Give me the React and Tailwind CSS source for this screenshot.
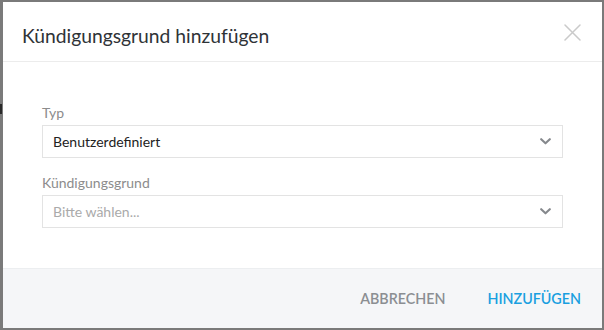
import React from 'react';

const Chevron = () => (
    <svg width="11" height="7" viewBox="0 0 11 7" fill="none" className="shrink-0">
        <path d="M1.2 1.2 L5.5 5.3 L9.8 1.2" stroke="#85888c" strokeWidth="2.1" strokeLinecap="round" strokeLinejoin="round" />
    </svg>
);

const CloseIcon = () => (
    <svg width="17" height="17" viewBox="0 0 17 17" fill="none">
        <path d="M1 1 L16 16 M16 1 L1 16" stroke="#cacaca" strokeWidth="1.5" strokeLinecap="round" />
    </svg>
);

const SelectField = ({ label, value, placeholder, className = '' }) => (
    <div className={className}>
        <label className="block text-[14px] leading-[20px] text-[#8c8c8c] mb-[2px]">{label}</label>
        <div className="h-[33px] border border-[#e3e3e3] bg-white flex items-center justify-between pl-[10px] pr-[11px]">
            {value ? (
                <span className="text-[14px] text-[#222]">{value}</span>
            ) : (
                <span className="text-[14px] text-[#aaa]">{placeholder}</span>
            )}
            <Chevron />
        </div>
    </div>
);

const App = () => {
    return (
        <div
            className="relative w-[604px] h-[330px] bg-[#7a7a7a] pl-[3px] pr-[2px] pt-[2px] pb-[2px]"
            style={{ fontFamily: 'Lato, "Open Sans", sans-serif' }}
        >
            {/* page content peeking behind the backdrop */}
            <div className="absolute left-0 top-[104px] w-[2px] h-[10px] bg-[#2a2a2a]"></div>

            <div className="h-full bg-white flex flex-col">
                {/* Header */}
                <div className="h-[60px] border-b border-[#ececec] flex items-start justify-between pl-[19px] pr-[21px] pt-[22px]">
                    <h2 className="text-[19.3px] leading-[24px] text-[#2f3337]">Kündigungsgrund hinzufügen</h2>
                    <button className="mt-[0px]">
                        <CloseIcon />
                    </button>
                </div>

                {/* Body */}
                <div className="flex-1 px-[39px] pt-[41px]">
                    <SelectField label="Typ" value="Benutzerdefiniert" />
                    <SelectField label="Kündigungsgrund" placeholder="Bitte wählen..." className="mt-[15px]" />
                </div>

                {/* Footer */}
                <div className="h-[60px] bg-[#f5f6f8] border-t border-[#eceef0] flex items-center justify-end gap-[42px] pr-[21px]">
                    <button className="text-[14.3px] font-semibold text-[#8b8e92]">ABBRECHEN</button>
                    <button className="text-[14.3px] font-semibold text-[#1a9fe0]">HINZUFÜGEN</button>
                </div>
            </div>
        </div>
    );
};

export default App;
